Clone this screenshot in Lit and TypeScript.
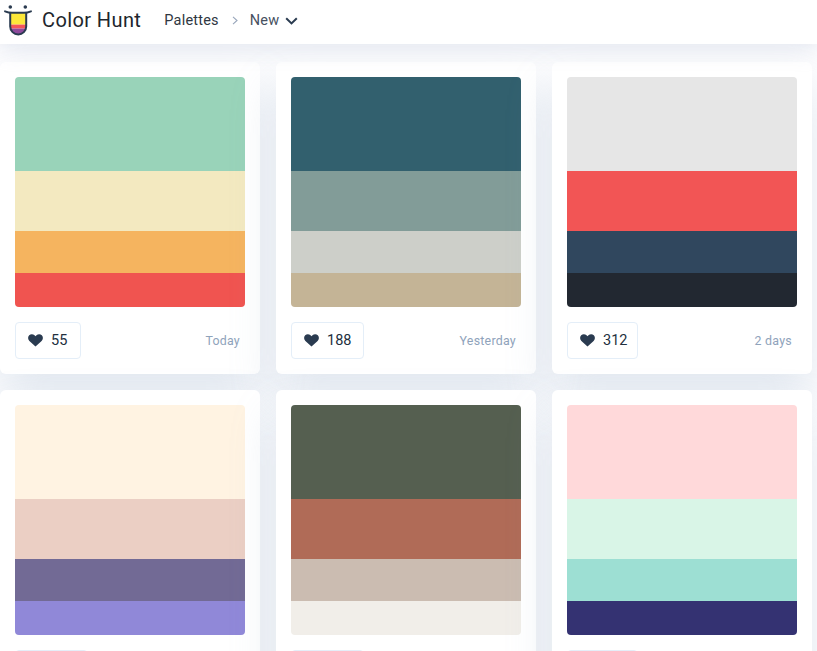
import { LitElement, html, css, svg } from "lit";
import { customElement } from "lit/decorators.js";

const CARDS = [
  { colors: ["#99d3b9", "#f3e9c0", "#f5b45f", "#f05450"], likes: "55", date: "Today", width: 66 },
  { colors: ["#32606e", "#829c98", "#cdcfc9", "#c4b496"], likes: "188", date: "Yesterday", width: 73 },
  { colors: ["#e6e6e6", "#f25555", "#30475e", "#222831"], likes: "312", date: "2 days", width: 71 },
  { colors: ["#fff3e2", "#ebcfc4", "#726a95", "#9088d8"], likes: "", date: "", width: 73 },
  { colors: ["#555f50", "#b06b57", "#cbbcb1", "#f1eee9"], likes: "", date: "", width: 73 },
  { colors: ["#ffd9da", "#d9f5e7", "#9ddfd3", "#343272"], likes: "", date: "", width: 71 },
];

const HEART = svg`<path d="M8.5 14.6 2.3 8.9C.6 7.2.6 4.6 2.1 3.1c1.5-1.4 3.9-1.4 5.4.1l1 1 1-1c1.5-1.5 3.9-1.5 5.4-.1 1.5 1.5 1.5 4.1-.2 5.8z" fill="#2a3b50"/>`;

@customElement("app-root")
export class AppRoot extends LitElement {
  static styles = css`
    :host {
      display: block;
      height: 651px;
      overflow: hidden;
      background: #fdfdfe;
      font-family: "Roboto", "Inter", sans-serif;
      color: #222831;
    }
    .header {
      position: relative;
      z-index: 2;
      height: 44px;
      background: #fff;
      box-shadow: 0 4px 24px rgba(190, 200, 220, 0.45);
      display: flex;
      align-items: center;
      box-sizing: border-box;
    }
    .logo { display: block; width: 36px; height: 38px; align-self: flex-start; }
    .brand {
      font-size: 20px;
      letter-spacing: 0.4px;
      margin-left: 6px;
      color: #20252c;
      margin-top: -4px;
    }
    .crumbs {
      display: flex;
      align-items: center;
      margin-left: 23px;
      font-size: 14.5px;
      letter-spacing: 0.2px;
      margin-top: -3px;
    }
    .palettes { color: #2f3742; }
    .sep { display: block; margin: 0 12px 0 13px; }
    .new { color: #47515f; }
    .chev { display: block; margin-left: 6px; }
    .grid {
      display: grid;
      grid-template-columns: repeat(3, 260px);
      gap: 16px;
      padding-top: 18px;
    }
    .card {
      background: #fff;
      border-radius: 6px;
      height: 312px;
      padding: 15px;
      box-sizing: border-box;
      box-shadow: 0 25px 45px rgba(150, 175, 200, 0.26);
    }
    .palette {
      height: 230px;
      border-radius: 4px;
      overflow: hidden;
      display: grid;
      grid-template-rows: 94px 60px 42px 34px;
    }
    .foot {
      display: flex;
      align-items: center;
      justify-content: space-between;
      margin-top: 15px;
      padding-right: 5px;
    }
    .like {
      height: 37px;
      box-sizing: border-box;
      border: 1px solid #e4eef8;
      border-radius: 4px;
      display: flex;
      align-items: center;
      padding-left: 12px;
      gap: 8px;
      font-size: 14.5px;
      color: #222f3e;
      background: #fff;
    }
    .heart { display: block; width: 15px; height: 13px; }
    .date {
      font-size: 12.4px;
      letter-spacing: 0.25px;
      color: #8fa3bb;
    }
  `;

  render() {
    return html`
      <div class="header">
        <svg class="logo" viewBox="0 0 36 38">
          <defs>
            <clipPath id="tongue"><path d="M10 13h16v13.5a8 8 0 0 1-16 0z"/></clipPath>
          </defs>
          <circle cx="10.3" cy="7" r="1.8" fill="#2a3b50"/>
          <circle cx="25.3" cy="7" r="1.8" fill="#2a3b50"/>
          <g clip-path="url(#tongue)">
            <rect x="9" y="13" width="18" height="11.6" fill="#fce83a"/>
            <rect x="9" y="24.6" width="18" height="4" fill="#f3555a"/>
            <rect x="9" y="28.6" width="18" height="6" fill="#8e4a9c"/>
          </g>
          <path d="M5 11.3c2.500 1 5 1.500 7 1.500h12c2 0 4.500-.5 7-1.500" fill="none" stroke="#2a3b50" stroke-width="1.900" stroke-linecap="round"/>
          <path d="M10.200 13v13.500a8 8 0 0 0 16 0V13" fill="none" stroke="#2a3b50" stroke-width="2"/>
        </svg>
        <span class="brand">Color Hunt</span>
        <div class="crumbs">
          <span class="palettes">Palettes</span>
          <svg class="sep" width="6" height="9" viewBox="0 0 6 9"><path d="M1 .8 5 4.500 1 8.200" fill="none" stroke="#98a6bb" stroke-width="1.100"/></svg>
          <span class="new">New</span>
          <svg class="chev" width="13" height="8" viewBox="0 0 13 8"><path d="M1.200 1.200 6.500 6.400 11.800 1.200" fill="none" stroke="#2a3b50" stroke-width="2"/></svg>
        </div>
      </div>
      <div class="grid">
        ${CARDS.map(
          (c) => html`
            <div class="card">
              <div class="palette">
                ${c.colors.map((col) => html`<div style="background:${col}"></div>`)}
              </div>
              <div class="foot">
                <div class="like" style="width:${c.width}px">
                  ${c.likes
                    ? html`<svg class="heart" viewBox="0.900 1.900 15.200 13">${HEART}</svg>
                        <span>${c.likes}</span>`
                    : ""}
                </div>
                ${c.date ? html`<span class="date">${c.date}</span>` : ""}
              </div>
            </div>
          `
        )}
      </div>
    `;
  }
}
